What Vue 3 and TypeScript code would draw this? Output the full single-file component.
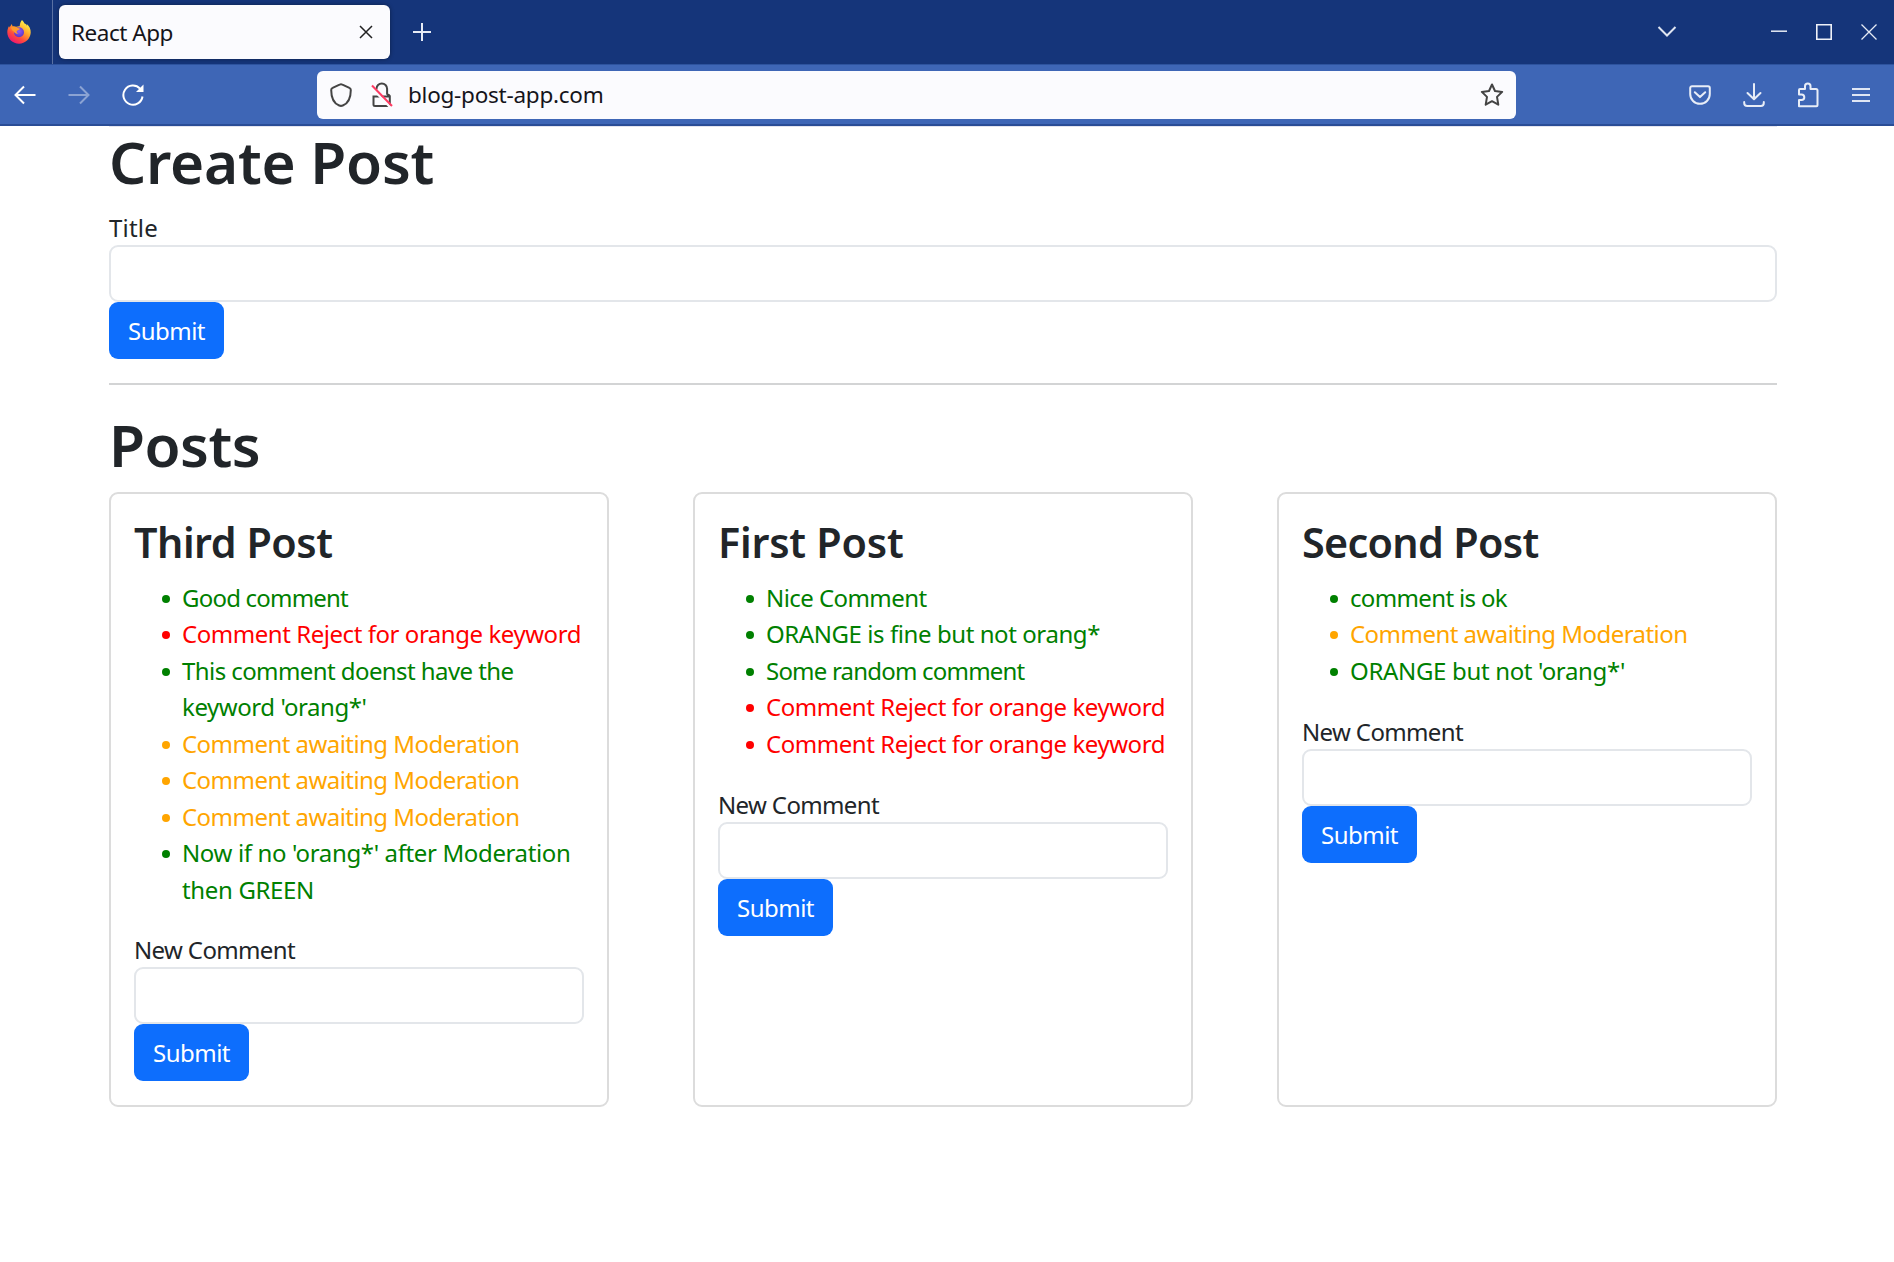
<script setup lang="ts">
import type { Directive } from 'vue'

type Status = 'approved' | 'rejected' | 'pending'

// A run of text on one line, with the width it should occupy.
interface Line { text: string; width: number }
interface Comment { status: Status; lines: Line[] }
interface Post { title: Line; comments: Comment[] }

const rejected = (): Comment => ({ status: 'rejected', lines: [{ text: 'Comment Reject for orange keyword', width: 399 }] })
const pending = (): Comment => ({ status: 'pending', lines: [{ text: 'Comment awaiting Moderation', width: 337.5 }] })
const approved = (...lines: Line[]): Comment => ({ status: 'approved', lines })

const posts: Post[] = [
  {
    title: { text: 'Third Post', width: 198.5 },
    comments: [
      approved({ text: 'Good comment', width: 166 }),
      rejected(),
      approved({ text: 'This comment doenst have the', width: 331.5 }, { text: "keyword 'orang*'", width: 184.5 }),
      pending(),
      pending(),
      pending(),
      approved({ text: "Now if no 'orang*' after Moderation", width: 388.5 }, { text: 'then GREEN', width: 132 }),
    ],
  },
  {
    title: { text: 'First Post', width: 185.5 },
    comments: [
      approved({ text: 'Nice Comment', width: 160.5 }),
      approved({ text: 'ORANGE is fine but not orang*', width: 334 }),
      approved({ text: 'Some random comment', width: 258.5 }),
      rejected(),
      rejected(),
    ],
  },
  {
    title: { text: 'Second Post', width: 236.5 },
    comments: [
      approved({ text: 'comment is ok', width: 157 }),
      pending(),
      approved({ text: "ORANGE but not 'orang*'", width: 275 }),
    ],
  },
]

// Adjusts tracking so that the text fills the given width.
const vFit: Directive<HTMLElement, number> = {
  mounted(el, { value }) {
    const count = (el.textContent ?? '').length
    el.style.letterSpacing = '0.001px'
    const natural = el.getBoundingClientRect().width
    el.style.letterSpacing = `${(value - natural) / count}px`
  },
}
</script>

<template>
  <div class="window">
    <div class="tabbar">
      <div class="brand">
        <svg width="24" height="24" viewBox="0 0 24 24">
          <defs>
            <linearGradient id="flame" x1="0.8" y1="0.1" x2="0.25" y2="0.95">
              <stop offset="0" stop-color="#fff24a" />
              <stop offset="0.38" stop-color="#ffa52a" />
              <stop offset="0.7" stop-color="#ff4a3d" />
              <stop offset="1" stop-color="#f0176f" />
            </linearGradient>
            <radialGradient id="globe" cx="0.5" cy="0.4" r="0.6">
              <stop offset="0" stop-color="#8f5cf5" />
              <stop offset="1" stop-color="#5a35c8" />
            </radialGradient>
          </defs>
          <path fill="url(#flame)" d="M15 0c1.200 1 2 2.200 2.500 3.600 1 .2 2 1.300 2.600 2.400 0-.8-.2-1.400-.4-2C22.300 6 24 9.200 23.700 12.800 23.300 19 18.200 23.700 12 23.700S.3 18.600.3 12.200c0-2.400.7-4.600 1.800-6.300L2.500 7.500 4.800 4l.7 2.200c1.300-.2 2.600 0 3.700.6 1-.5 2.500-.8 3.500-.6C12.800 3.700 13.600 1.500 15 0z" />
          <circle cx="12" cy="12.300" r="5" fill="url(#globe)" />
          <path fill="#ff9a2b" d="M4 7.500c2-1.400 4.500-1 6 .4 1.200 0 2.500.3 3 .8-.2 1.400-2.700 1.300-3.200 2.300-.4 1 .2 2 1.700 2.300-1.500 1-4 .3-4.600-1.700C5.500 11 4.500 9.500 4 7.500z" />
        </svg>
      </div>
      <div class="tab">
        <span v-fit="102" class="ui-text">React App</span>
        <svg width="14" height="14" viewBox="0 0 14 14"><path d="M1 1l12 12M13 1L1 13" stroke="#222" stroke-width="1.500" /></svg>
      </div>
      <svg class="plus" width="20" height="20" viewBox="0 0 20 20"><path d="M1 10h18M10 1v18" stroke="#e6ebf5" stroke-width="2" /></svg>
      <div class="window-controls">
        <svg class="chevron" width="20" height="14" viewBox="0 0 20 14"><path d="M1.500 2l8.500 8.500L18.500 2" fill="none" stroke="#dfe5f1" stroke-width="2" /></svg>
        <svg class="minimize" width="16" height="16" viewBox="0 0 16 16"><path d="M0 7.200h16" stroke="#e6ebf5" stroke-width="1.500" /></svg>
        <svg class="maximize" width="16" height="16" viewBox="0 0 16 16"><path d="M.8.800h14.400v14.400H.8z" fill="none" stroke="#eef1f8" stroke-width="1.600" /></svg>
        <svg width="16" height="16" viewBox="0 0 16 16"><path d="M.5.500l15 15M15.500.500l-15 15" stroke="#e6ebf5" stroke-width="1.300" /></svg>
      </div>
    </div>

    <div class="toolbar">
      <svg class="back" width="22" height="20" viewBox="0 0 22 20"><path d="M21.500 10H2M10 1.500L1.500 10l8.500 8.500" fill="none" stroke="#fff" stroke-width="2" /></svg>
      <svg class="forward" width="22" height="20" viewBox="0 0 22 20"><path d="M.5 10H20M12 1.500l8.500 8.500-8.500 8.500" fill="none" stroke="#fff" stroke-width="2" /></svg>
      <svg class="reload" width="22" height="22" viewBox="0 0 22 22">
        <path d="M18 4.600A9.600 9.600 0 1 0 20.500 12.500" fill="none" stroke="#fff" stroke-width="2" />
        <path d="M21.500.5v7.500h-7.500z" fill="#fff" />
      </svg>

      <div class="urlbar">
        <svg width="22" height="24" viewBox="0 0 22 24"><path d="M11 1.200c.5 0 1 .2 1.400.4l7 3.300c.9.400 1.400 1.100 1.400 2 0 8-3.200 13.600-8 15.600-1.200.5-2.400.5-3.600 0-4.800-2-8-7.600-8-15.600 0-.9.500-1.600 1.400-2l7-3.300c.4-.2.9-.4 1.400-.4z" fill="none" stroke="#444" stroke-width="2" /></svg>
        <svg class="lock" width="22" height="26" viewBox="0 0 22 26">
          <path d="M5.500 7.500V6.800a5.300 5.300 0 0 1 10.600 0v6M2.500 14.500h16.300v8a1.500 1.500 0 0 1-1.500 1.500H4a1.500 1.500 0 0 1-1.500-1.500zM16 12.500c1.500 0 2.800.7 2.800 2.500" fill="none" stroke="#444" stroke-width="2" />
          <path d="M0 5l19.500 20.500" stroke="#fbfbfe" stroke-width="2.500" />
          <path d="M1 3.500l20 20.500" stroke="#ff3b63" stroke-width="2" />
        </svg>
        <span v-fit="195.5" class="ui-text address">blog-post-app.com</span>
        <svg class="star" width="24" height="24" viewBox="0 0 24 24"><path d="M12 1.500l3 6.500 7.200.9-5.200 5 1.300 7.800L12 18.200l-6.300 3.500L7 13.900l-5.200-5L9 8z" fill="none" stroke="#444" stroke-width="2" stroke-linejoin="round" /></svg>
      </div>

      <div class="actions">
        <svg width="22" height="20" viewBox="0 0 22 20"><path d="M3 1.200h16a1.800 1.800 0 0 1 1.800 1.800v6a9.800 9.800 0 0 1-19.600 0V3A1.800 1.800 0 0 1 3 1.200zM5.800 7.200l5.200 4.900 5.200-4.900" fill="none" stroke="#e8edf7" stroke-width="2" stroke-linecap="round" stroke-linejoin="round" /></svg>
        <svg class="download" width="22" height="24" viewBox="0 0 22 24"><path d="M11 1v15M4.500 10l6.500 6.300 6.500-6.300M1.200 19v1a3 3 0 0 0 3 3h13.600a3 3 0 0 0 3-3v-1" fill="none" stroke="#e8edf7" stroke-width="2" stroke-linecap="round" stroke-linejoin="round" /></svg>
        <svg class="puzzle" width="22" height="26" viewBox="0 0 22 26"><path d="M2 24.200V18h2.500a2.700 2.700 0 0 0 0-5.600H2V8a1 1 0 0 1 1-1h5V4.200a2.700 2.700 0 0 1 5.500 0V7H19a1.500 1.500 0 0 1 1.500 1.500v14.700a1 1 0 0 1-1 1z" fill="none" stroke="#e8edf7" stroke-width="2" stroke-linejoin="round" /></svg>
        <svg class="menu" width="20" height="16" viewBox="0 0 20 16"><path d="M1 2h18M1 8h18M1 14h18" stroke="#dfe6f4" stroke-width="2" /></svg>
      </div>
    </div>

    <main class="page">
      <h1><span v-fit="325">Create Post</span></h1>
      <form class="form" @submit.prevent>
        <label><span v-fit="49">Title</span></label>
        <input type="text" />
        <button><span v-fit="77">Submit</span></button>
      </form>
      <hr />
      <h1 class="posts-heading"><span v-fit="151">Posts</span></h1>
      <div class="posts">
        <article v-for="post in posts" :key="post.title.text" class="card">
          <h3><span v-fit="post.title.width">{{ post.title.text }}</span></h3>
          <ul>
            <li v-for="(comment, i) in post.comments" :key="i" :class="comment.status">
              <i class="dot"></i>
              <div>
                <div v-for="line in comment.lines" :key="line.text" class="line"><span v-fit="line.width">{{ line.text }}</span></div>
              </div>
            </li>
          </ul>
          <form class="form" @submit.prevent>
            <label><span v-fit="161">New Comment</span></label>
            <input type="text" />
            <button><span v-fit="77">Submit</span></button>
          </form>
        </article>
      </div>
    </main>
  </div>
</template>

<style>
html,
body {
  background: #fff;
  overflow: hidden;
}
</style>

<style scoped>
.window {
  box-sizing: border-box;
  width: 1894px;
  height: 1262px;
  overflow: hidden;
  background: #fff;
  color: #212529;
  font-family: 'Noto Sans', 'Open Sans', sans-serif;
  font-size: 24px;
}
span {
  display: inline-block;
  white-space: nowrap;
}
svg {
  display: block;
  flex: none;
}

.tabbar {
  display: flex;
  align-items: center;
  height: 64px;
  background: #15357a;
}
.brand {
  box-sizing: border-box;
  display: flex;
  align-items: center;
  width: 53px;
  height: 64px;
  padding-left: 7px;
  border-right: 1px solid #5a71a3;
}
.tab {
  box-sizing: border-box;
  display: flex;
  align-items: center;
  justify-content: space-between;
  width: 331px;
  height: 54px;
  margin-left: 6px;
  padding: 0 17px 0 12px;
  border-radius: 6px;
  background: #fbfbfe;
  box-shadow: 0 0 4px rgba(0, 0, 0, 0.4);
}
.ui-text {
  color: #15141a;
  font-size: 22.5px;
}
.plus {
  margin-left: 22px;
}
.window-controls {
  display: flex;
  align-items: center;
  margin-left: auto;
  margin-right: 17px;
}
.chevron {
  margin-right: 94px;
}
.minimize {
  margin-right: 29px;
}
.maximize {
  margin-right: 29px;
}

.toolbar {
  box-sizing: border-box;
  display: flex;
  align-items: center;
  height: 62px;
  background: #3e66b6;
  border-top: 1px solid #2d539e;
  border-bottom: 2px solid #2a4d96;
}
.back {
  margin-left: 14px;
}
.forward {
  margin-left: 32px;
  opacity: 0.4;
}
.reload {
  margin-left: 32px;
}
.urlbar {
  box-sizing: border-box;
  display: flex;
  align-items: center;
  width: 1199.5px;
  height: 48px;
  margin-left: 172.5px;
  padding: 0 12px 0 13px;
  border-radius: 6px;
  background: #fbfbfe;
}
.lock {
  margin-left: 19.5px;
}
.address {
  margin-left: 15px;
}
.star {
  margin-left: auto;
}
.actions {
  display: flex;
  align-items: center;
  margin-left: auto;
  margin-right: 23px;
}
.download {
  margin-left: 31.5px;
}
.puzzle {
  margin-left: 32px;
}
.menu {
  margin-left: 32.5px;
}

.page {
  box-sizing: border-box;
  width: 1668px;
  margin-left: 109px;
  border-top: 1px solid #e4e4ee;
}
h1,
h3 {
  margin: 0;
  font-weight: 600;
}
h1 {
  height: 69px;
  padding-bottom: 15px;
  font-size: 58.5px;
  line-height: 69px;
}
.posts-heading {
  height: 71px;
  padding-bottom: 12px;
  line-height: 71px;
}
h3 {
  font-size: 41.300px;
  line-height: 51px;
}
.form {
  display: flex;
  flex-direction: column;
  align-items: flex-start;
}
label {
  height: 34px;
  line-height: 33px;
}
input {
  box-sizing: border-box;
  width: 100%;
  height: 57px;
  border: 2px solid #e3e6ea;
  border-radius: 9px;
  background: #fff;
  outline: 0;
}
button {
  height: 57px;
  padding: 0 19px;
  border: 0;
  border-radius: 9px;
  background: #0d6efd;
  color: #fff;
  font: inherit;
}
hr {
  height: 2px;
  margin: 24px 0;
  border: 0;
  background: #d3d4d5;
}
.posts {
  display: grid;
  grid-template-columns: repeat(3, 1fr);
  gap: 84px;
}
.card {
  box-sizing: border-box;
  height: 615px;
  padding: 23px 23px;
  border: 2px solid #dcdcdc;
  border-radius: 9px;
}
ul {
  margin: 12px 0 25.500px;
  padding: 0;
  list-style: none;
}
li {
  display: flex;
  padding-left: 28px;
}
.dot {
  width: 8px;
  height: 8px;
  margin: 15px 12px 0 0;
  border-radius: 50%;
  background: currentColor;
}
.line {
  height: 36.450px;
  line-height: 36.450px;
}
.approved {
  color: #008000;
}
.rejected {
  color: #f00;
}
.pending {
  color: #ffa500;
}
</style>
